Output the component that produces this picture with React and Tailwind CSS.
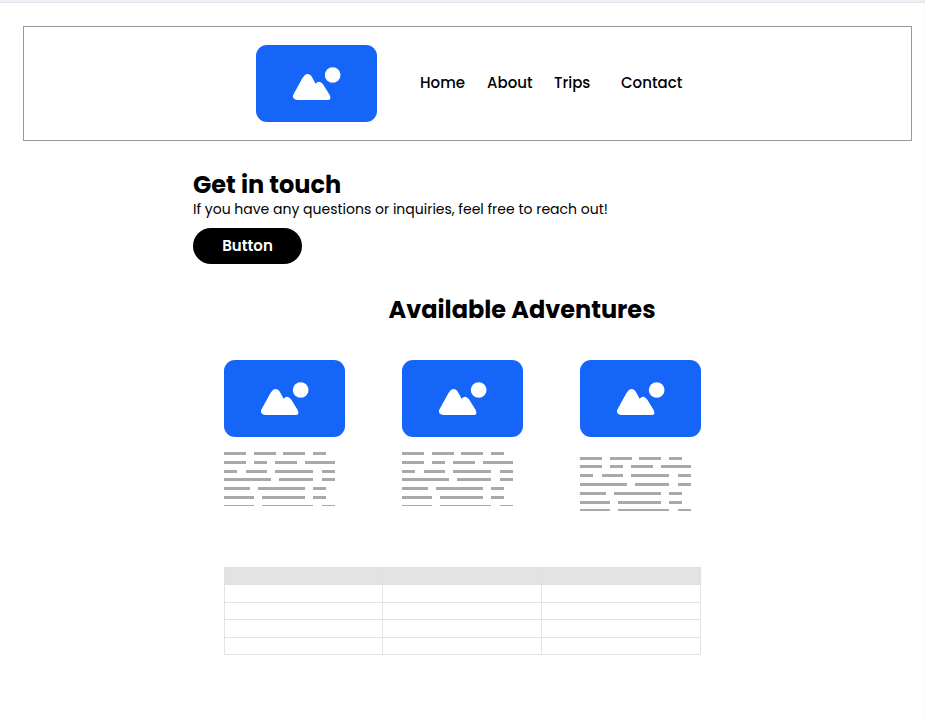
const links = ["Home", "About", "Trips", "Contact"];

// Each row lists [start, end] pairs for the words of the placeholder copy.
const words = [
  [[0, 22], [30, 52], [59, 81], [89, 102]],
  [[0, 22], [30, 43], [51, 73], [81, 111]],
  [[0, 13], [22, 43], [51, 89], [98, 111]],
  [[0, 47], [55, 89], [98, 111]],
  [[0, 26], [34, 81], [89, 102]],
  [[0, 30], [38, 81], [89, 102]],
  [[0, 30], [38, 89], [98, 111]],
];

const adventures = [
  { id: "one", tops: [0, 9, 18, 26, 35, 44, 53], last: 1, space: "mt-[15px]" },
  { id: "two", tops: [0, 9, 18, 26, 35, 44, 53], last: 1, space: "mt-[15px]" },
  { id: "three", tops: [0, 8, 17, 26, 35, 44, 52], last: 2, space: "mt-5" },
];

function Picture() {
  return (
    <div className="h-[77px] w-[121px] shrink-0 overflow-hidden rounded-[11px] bg-[#1565f8]">
      <svg viewBox="0 0 363 231" className="block h-full w-full" fill="white" aria-hidden="true">
        <circle cx="230" cy="90" r="23.5" />
        <path d="M113 147 L139 100 Q147 87 155 87 Q163 87 169 98 L179 116 Q184 110 190 110 Q197 111 202 119 L221 150 Q228 165 215 165 L124 165 Q109 164 111 151 Z" />
      </svg>
    </div>
  );
}

function Copy({ tops, last, space }) {
  return (
    <svg width="111" height="54" viewBox="0 0 111 54" className={`block ${space}`} fill="#a9a9a9" aria-hidden="true">
      {words.map((row, r) =>
        row.map(([a, b]) => (
          <rect key={`${r}-${a}`} x={a} y={tops[r]} width={b - a} height={r === 6 ? last : 3} />
        ))
      )}
    </svg>
  );
}

export default function App() {
  return (
    <div className="min-h-screen bg-white font-[Poppins,Inter,sans-serif] text-black">
      <div className="h-[3px] border-b border-[#e2e5ea] bg-[#eceff4]" />
      <div className="min-h-[713px] border-r border-[#f8f8f8] pt-[23px]">
        <header className="mr-3 ml-[23px] flex h-[115px] items-center justify-center gap-[43px] border border-[#999999]">
          <Picture />
          <nav className="grid grid-cols-[67px_67px_67px_58px] pb-0.5 text-[15px] leading-6 font-medium">
            {links.map((name) => (
              <a key={name} href="#">{name}</a>
            ))}
          </nav>
        </header>

        <main>
          <section className="mx-auto mt-[30px] max-w-[538px]">
            <h1 className="text-2xl leading-7 font-bold">Get in touch</h1>
            <p className="text-sm leading-5">If you have any questions or inquiries, feel free to reach out!</p>
            <button type="button" className="mt-[9px] block h-9 w-[109px] rounded-full bg-black text-[15px] font-semibold text-white">
              Button
            </button>
          </section>

          <section className="mx-auto mt-[30px] w-full max-w-[477px]">
            <h2 className="pl-[165px] text-2xl leading-8 font-bold whitespace-nowrap">Available Adventures</h2>
            <div className="mt-[34px] flex items-start justify-between">
              {adventures.map((item) => (
                <article key={item.id}>
                  <Picture />
                  <Copy tops={item.tops} last={item.last} space={item.space} />
                </article>
              ))}
            </div>

            <table className="mt-14 w-full table-fixed border-collapse">
              <thead>
                <tr className="h-[17px] bg-[#e3e3e3]">
                  <th className="border border-[#e0e0e0] p-0" />
                  <th className="border border-[#e0e0e0] p-0" />
                  <th className="border border-[#e0e0e0] p-0" />
                </tr>
              </thead>
              <tbody>
                {[0, 1, 2, 3].map((row) => (
                  <tr key={row} className="odd:h-[18px] even:h-[17px]">
                    <td className="border border-[#e3e3e3] p-0" />
                    <td className="border border-[#e3e3e3] p-0" />
                    <td className="border border-[#e3e3e3] p-0" />
                  </tr>
                ))}
              </tbody>
            </table>
          </section>
        </main>
      </div>
    </div>
  );
}
